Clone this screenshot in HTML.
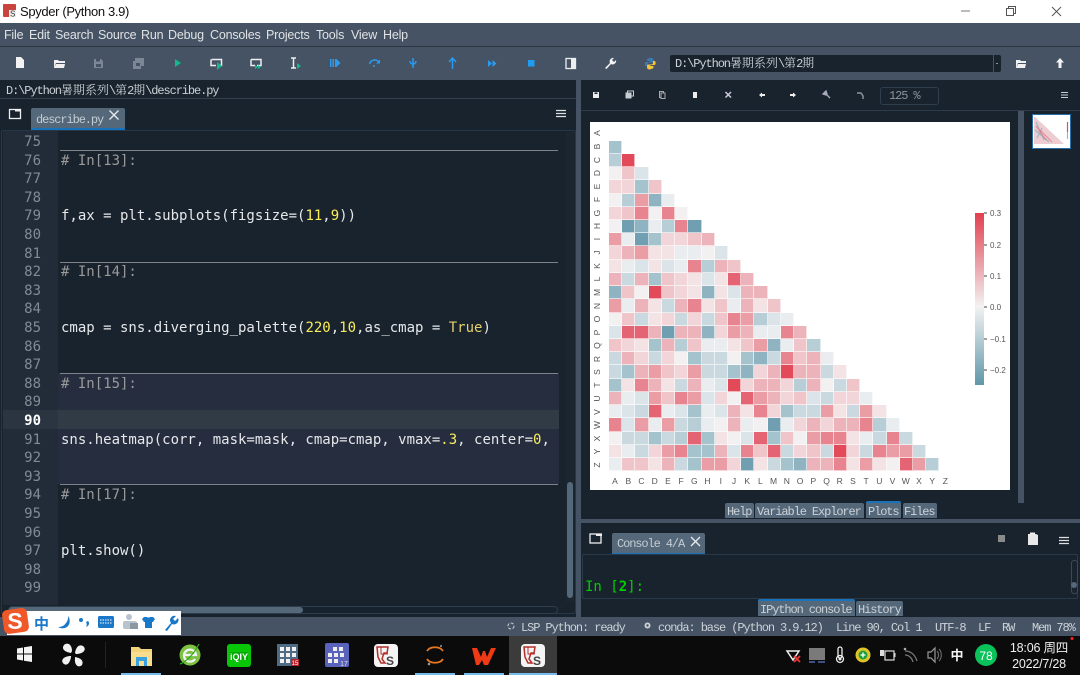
<!DOCTYPE html>
<html><head><meta charset="utf-8"><title>Spyder</title>
<style>
html,body{margin:0;padding:0;width:1080px;height:675px;overflow:hidden;background:#19232d}
div.a{position:absolute}
div.t{position:absolute;margin-top:1px;white-space:pre;font:12px/14px "Liberation Mono","Noto Serif CJK SC",monospace;letter-spacing:-1.1px;color:#ccd2d7}
div.t b{font-weight:400;letter-spacing:0}
div.m{position:absolute;white-space:pre;font:12.5px/16px "Liberation Sans",sans-serif;letter-spacing:-.2px;color:#e0e2e4;top:27px}
div.n{position:absolute;left:10px;width:31px;margin-top:1px;text-align:right;font:14px/18px "DejaVu Sans Mono",monospace;color:#7f8b95}
div.c{position:absolute;left:61px;margin-top:1px;white-space:pre;font:14px/18px "DejaVu Sans Mono",monospace;color:#e6e8ea}
div.c u{text-decoration:none;color:#faed5c}
div.h{color:#9a9a9a}
div.tab{position:absolute;background:#54687a;border-radius:2px 2px 0 0}
#heat{position:absolute;left:609px;top:140.7px}
#heat p{display:flex;margin:0;height:13.22px}
#heat i{display:block;flex:0 0 13.22px;height:13.22px;box-shadow:inset -1px -1px 0 rgba(255,255,255,.6)}
i.a{background:#e9edef}i.b{background:#dbe4e8}i.c{background:#c9d9df}i.d{background:#b7ced6}i.e{background:#a5c3cd}i.f{background:#8fb3c0}i.g{background:#6f9fb0}
i.n{background:#f2f0f0}i.p{background:#f3e3e5}i.q{background:#f1d5d9}i.r{background:#efc5ca}i.s{background:#edb3ba}i.t{background:#eb9da6}i.u{background:#e88490}i.v{background:#e56473}i.w{background:#e24a5a}
svg{position:absolute;left:0;top:0}
</style></head><body>
<!-- title bar -->
<div class="a" style="left:0;top:0;width:1080px;height:23px;background:#fff;border-bottom:1px solid #8b8f94"></div>
<div class="a" style="left:20px;top:3px;font:13px/18px 'Liberation Sans',sans-serif;letter-spacing:-.35px;color:#111;white-space:pre">Spyder (Python 3.9)</div>
<!-- menu -->
<div class="a" style="left:0;top:23px;width:1080px;height:23px;background:#455364;border-bottom:1px solid #2b3642"></div>
<div class="m" style="left:4px">File</div><div class="m" style="left:29px">Edit</div><div class="m" style="left:55px">Search</div><div class="m" style="left:98px">Source</div><div class="m" style="left:141px">Run</div><div class="m" style="left:168px">Debug</div><div class="m" style="left:210px">Consoles</div><div class="m" style="left:266px">Projects</div><div class="m" style="left:316px">Tools</div><div class="m" style="left:351px">View</div><div class="m" style="left:383px">Help</div>
<!-- toolbar -->
<div class="a" style="left:0;top:47px;width:1080px;height:33px;background:#455364"></div>
<div class="a" style="left:670px;top:55px;width:331px;height:17px;background:#19232d;border-radius:2px"></div>
<div class="a" style="left:993px;top:55px;width:1px;height:17px;background:#455364"></div>
<div class="t" style="left:675px;top:56px"><span>D:\Python</span><b>暑期系列</b>\<b>第</b>2<b>期</b></div>
<!-- path -->
<div class="a" style="left:0;top:98px;width:576px;height:1px;background:#32414b"></div>
<div class="t" style="left:6px;top:83px">D:\Python<b>暑期系列</b>\<b>第</b>2<b>期</b>\describe.py</div>
<!-- editor tab -->
<div class="tab" style="left:31px;top:108px;width:94px;height:20px;border-bottom:2px solid #1a72bb"></div>
<div class="t" style="left:36px;top:112px;color:#c4ccd3">describe.py</div>
<!-- editor -->
<div class="a" style="left:1px;top:130px;width:575px;height:484px;box-sizing:border-box;border:1px solid #24384c;border-radius:2px"></div>
<div class="a" style="left:3px;top:131px;width:55px;height:474px;background:#212c38"></div>
<div class="a" style="left:58px;top:373px;width:501px;height:111px;background:#252d3e"></div>
<div class="a" style="left:58px;top:410px;width:501px;height:19px;background:#303b46"></div>
<div class="a" style="left:3px;top:410px;width:55px;height:19px;background:#2a3541"></div>
<div class="a" style="left:60px;top:150px;width:498px;height:1px;background:#7d8388"></div>
<div class="a" style="left:60px;top:262px;width:498px;height:1px;background:#7d8388"></div>
<div class="a" style="left:60px;top:373px;width:498px;height:1px;background:#7d8388"></div>
<div class="a" style="left:60px;top:484px;width:498px;height:1px;background:#7d8388"></div>
<div class="n" style="top:132px">75</div><div class="n" style="top:151px">76</div><div class="n" style="top:169px">77</div><div class="n" style="top:188px">78</div><div class="n" style="top:206px">79</div><div class="n" style="top:225px">80</div><div class="n" style="top:244px">81</div><div class="n" style="top:262px">82</div><div class="n" style="top:281px">83</div><div class="n" style="top:299px">84</div><div class="n" style="top:318px">85</div><div class="n" style="top:337px">86</div><div class="n" style="top:355px">87</div><div class="n" style="top:374px">88</div><div class="n" style="top:392px">89</div><div class="n" style="top:411px;color:#fff;font-weight:700">90</div><div class="n" style="top:430px">91</div><div class="n" style="top:448px">92</div><div class="n" style="top:467px">93</div><div class="n" style="top:485px">94</div><div class="n" style="top:504px">95</div><div class="n" style="top:523px">96</div><div class="n" style="top:541px">97</div><div class="n" style="top:560px">98</div><div class="n" style="top:578px">99</div>
<div class="c h" style="top:151px"># In[13]:</div>
<div class="c" style="top:206px">f,ax = plt.subplots(figsize=(<u>11</u>,<u>9</u>))</div>
<div class="c h" style="top:262px"># In[14]:</div>
<div class="c" style="top:318px">cmap = sns.diverging_palette(<u>220</u>,<u>10</u>,as_cmap = <span style="color:#e4cf6a">True</span>)</div>
<div class="c h" style="top:374px"># In[15]:</div>
<div class="c" style="top:430px">sns.heatmap(corr, mask=mask, cmap=cmap, vmax=<u>.3</u>, center=<u>0</u>,</div>
<div class="c h" style="top:485px"># In[17]:</div>
<div class="c" style="top:541px">plt.show()</div>
<!-- editor scrollbars -->
<div class="a" style="left:566px;top:132px;width:8px;height:470px;background:#1b2631"></div>
<div class="a" style="left:567px;top:482px;width:6px;height:116px;background:#54687a;border-radius:3px"></div>
<div class="a" style="left:8px;top:606px;width:548px;height:6px;border:1px solid #2d3d4c;border-radius:4px;box-sizing:content-box"></div>
<div class="a" style="left:9px;top:607px;width:294px;height:6px;background:#54687a;border-radius:3px"></div>
<!-- splitter -->
<div class="a" style="left:576px;top:80px;width:5px;height:537px;background:#455364"></div>
<!-- plots pane -->
<div class="a" style="left:581px;top:110px;width:499px;height:1px;background:#2e3c4a"></div>
<div class="a" style="left:880px;top:87px;width:57px;height:16px;border:1px solid #2f3e4c;border-radius:3px"></div>
<div class="t" style="left:889px;top:88px;color:#8a949c">125 %</div>
<div class="a" style="left:590px;top:122px;width:420px;height:368px;background:#fff"></div>
<div class="a" style="left:1018px;top:111px;width:6px;height:392px;background:#455364"></div>
<div class="a" style="left:1032px;top:114px;width:37px;height:33px;background:#fff;border:1px solid #2a6ea8"></div>
<div id="heat">
<p><i class=e></i></p>
<p><i class=d></i><i class=w></i></p>
<p><i class=n></i><i class=r></i><i class=b></i></p>
<p><i class=q></i><i class=q></i><i class=e></i><i class=r></i></p>
<p><i class=n></i><i class=d></i><i class=t></i><i class=f></i><i class=a></i></p>
<p><i class=q></i><i class=r></i><i class=u></i><i class=n></i><i class=u></i><i class=n></i></p>
<p><i class=n></i><i class=g></i><i class=f></i><i class=a></i><i class=d></i><i class=u></i><i class=g></i></p>
<p><i class=t></i><i class=a></i><i class=g></i><i class=e></i><i class=q></i><i class=q></i><i class=r></i><i class=s></i></p>
<p><i class=q></i><i class=s></i><i class=t></i><i class=p></i><i class=p></i><i class=a></i><i class=a></i><i class=n></i><i class=b></i></p>
<p><i class=p></i><i class=a></i><i class=b></i><i class=p></i><i class=b></i><i class=a></i><i class=u></i><i class=d></i><i class=s></i><i class=r></i></p>
<p><i class=s></i><i class=c></i><i class=s></i><i class=e></i><i class=r></i><i class=q></i><i class=p></i><i class=b></i><i class=p></i><i class=v></i><i class=s></i></p>
<p><i class=f></i><i class=r></i><i class=n></i><i class=w></i><i class=r></i><i class=q></i><i class=p></i><i class=f></i><i class=p></i><i class=b></i><i class=s></i><i class=s></i></p>
<p><i class=t></i><i class=a></i><i class=s></i><i class=p></i><i class=c></i><i class=s></i><i class=u></i><i class=p></i><i class=r></i><i class=a></i><i class=s></i><i class=p></i><i class=r></i></p>
<p><i class=n></i><i class=r></i><i class=c></i><i class=p></i><i class=q></i><i class=c></i><i class=q></i><i class=c></i><i class=r></i><i class=u></i><i class=t></i><i class=d></i><i class=b></i><i class=a></i></p>
<p><i class=b></i><i class=v></i><i class=v></i><i class=s></i><i class=g></i><i class=s></i><i class=s></i><i class=f></i><i class=q></i><i class=t></i><i class=s></i><i class=a></i><i class=a></i><i class=u></i><i class=s></i></p>
<p><i class=r></i><i class=q></i><i class=p></i><i class=e></i><i class=s></i><i class=d></i><i class=r></i><i class=a></i><i class=a></i><i class=p></i><i class=r></i><i class=t></i><i class=f></i><i class=a></i><i class=r></i><i class=d></i></p>
<p><i class=c></i><i class=s></i><i class=q></i><i class=c></i><i class=q></i><i class=n></i><i class=e></i><i class=c></i><i class=c></i><i class=n></i><i class=e></i><i class=f></i><i class=c></i><i class=u></i><i class=r></i><i class=s></i><i class=a></i></p>
<p><i class=c></i><i class=e></i><i class=s></i><i class=t></i><i class=r></i><i class=q></i><i class=t></i><i class=c></i><i class=c></i><i class=e></i><i class=f></i><i class=q></i><i class=s></i><i class=w></i><i class=s></i><i class=s></i><i class=c></i><i class=p></i></p>
<p><i class=e></i><i class=p></i><i class=u></i><i class=s></i><i class=p></i><i class=c></i><i class=s></i><i class=a></i><i class=b></i><i class=w></i><i class=q></i><i class=s></i><i class=s></i><i class=q></i><i class=d></i><i class=s></i><i class=n></i><i class=c></i><i class=r></i></p>
<p><i class=s></i><i class=a></i><i class=b></i><i class=t></i><i class=r></i><i class=u></i><i class=t></i><i class=b></i><i class=q></i><i class=n></i><i class=v></i><i class=t></i><i class=s></i><i class=q></i><i class=r></i><i class=b></i><i class=c></i><i class=q></i><i class=q></i><i class=a></i></p>
<p><i class=a></i><i class=b></i><i class=c></i><i class=v></i><i class=a></i><i class=b></i><i class=e></i><i class=a></i><i class=b></i><i class=s></i><i class=p></i><i class=u></i><i class=q></i><i class=e></i><i class=c></i><i class=c></i><i class=t></i><i class=p></i><i class=c></i><i class=t></i><i class=p></i></p>
<p><i class=u></i><i class=b></i><i class=t></i><i class=a></i><i class=t></i><i class=c></i><i class=d></i><i class=a></i><i class=n></i><i class=s></i><i class=a></i><i class=n></i><i class=g></i><i class=a></i><i class=q></i><i class=s></i><i class=q></i><i class=s></i><i class=s></i><i class=u></i><i class=d></i><i class=a></i></p>
<p><i class=n></i><i class=c></i><i class=c></i><i class=e></i><i class=c></i><i class=d></i><i class=v></i><i class=e></i><i class=p></i><i class=n></i><i class=b></i><i class=v></i><i class=e></i><i class=r></i><i class=n></i><i class=t></i><i class=u></i><i class=u></i><i class=p></i><i class=a></i><i class=c></i><i class=u></i><i class=c></i></p>
<p><i class=p></i><i class=a></i><i class=c></i><i class=q></i><i class=t></i><i class=u></i><i class=e></i><i class=e></i><i class=s></i><i class=b></i><i class=u></i><i class=r></i><i class=v></i><i class=c></i><i class=q></i><i class=r></i><i class=c></i><i class=w></i><i class=q></i><i class=c></i><i class=u></i><i class=t></i><i class=t></i><i class=c></i></p>
<p><i class=a></i><i class=r></i><i class=r></i><i class=p></i><i class=s></i><i class=c></i><i class=e></i><i class=t></i><i class=t></i><i class=q></i><i class=g></i><i class=p></i><i class=c></i><i class=e></i><i class=f></i><i class=s></i><i class=s></i><i class=u></i><i class=p></i><i class=t></i><i class=p></i><i class=n></i><i class=v></i><i class=t></i><i class=d></i></p>
</div>
<div class="a" style="left:975px;top:213px;width:9px;height:172px;background:linear-gradient(#e23f4f 0%,#f2f2f2 54.5%,#5f97a9 100%)"></div>
<!-- plot tabs -->
<div class="tab" style="left:725px;top:503px;width:29px;height:15px"></div><div class="t" style="left:727px;top:504px">Help</div>
<div class="tab" style="left:755px;top:503px;width:109px;height:15px"></div><div class="t" style="left:757px;top:504px">Variable Explorer</div>
<div class="tab" style="left:866px;top:503px;width:35px;height:15px;border-top:2px solid #1a72bb;margin-top:-2px"></div><div class="t" style="left:868px;top:504px">Plots</div>
<div class="tab" style="left:903px;top:503px;width:34px;height:15px"></div><div class="t" style="left:904px;top:504px">Files</div>
<!-- splitter h -->
<div class="a" style="left:581px;top:519px;width:499px;height:4px;background:#455364"></div>
<!-- console -->
<div class="tab" style="left:612px;top:533px;width:93px;height:20px;border-bottom:2px solid #1a72bb"></div>
<div class="t" style="left:617px;top:536px;color:#c4ccd3">Console 4/A</div>
<div class="a" style="left:582px;top:554px;width:496px;height:45px;box-sizing:border-box;border:1px solid #2a3947;border-radius:2px"></div>
<div class="a" style="left:585px;top:578px;white-space:pre;font:14px/18px 'DejaVu Sans Mono',monospace;color:#00d000">In [<b>2</b>]:</div>
<div class="a" style="left:1071px;top:560px;width:5px;height:32px;border:1px solid #3a4a58;border-radius:3px"></div>
<div class="a" style="left:1071px;top:582px;width:6px;height:6px;background:#54687a;border-radius:50%"></div>
<div class="tab" style="left:758px;top:601px;width:97px;height:15px;border-top:2px solid #1a72bb;margin-top:-2px"></div><div class="t" style="left:760px;top:602px">IPython console</div>
<div class="tab" style="left:856px;top:601px;width:47px;height:15px"></div><div class="t" style="left:858px;top:602px">History</div>
<!-- status bar -->
<div class="a" style="left:0;top:617px;width:1080px;height:19px;background:#455364"></div>
<div class="t" style="left:521px;top:620px">LSP Python: ready</div>
<div class="t" style="left:658px;top:620px">conda: base (Python 3.9.12)</div>
<div class="t" style="left:836px;top:620px">Line 90, Col 1</div>
<div class="t" style="left:935px;top:620px">UTF-8</div>
<div class="t" style="left:978px;top:620px">LF</div>
<div class="t" style="left:1002px;top:620px">RW</div>
<div class="t" style="left:1032px;top:620px">Mem 78%</div>
<!-- taskbar -->
<div class="a" style="left:0;top:636px;width:1080px;height:39px;background:#0b0b0c"></div>
<div class="a" style="left:509px;top:636px;width:48px;height:39px;background:#3b3b3b"></div>
<div class="a" style="left:121px;top:673px;width:40px;height:2px;background:#76b9ed"></div>
<div class="a" style="left:415px;top:673px;width:40px;height:2px;background:#76b9ed"></div>
<div class="a" style="left:464px;top:673px;width:40px;height:2px;background:#76b9ed"></div>
<div class="a" style="left:509px;top:673px;width:48px;height:2px;background:#76b9ed"></div>
<div class="a" style="left:1009px;top:640px;width:60px;font:12.5px/16px 'Liberation Sans','Noto Sans CJK SC',sans-serif;letter-spacing:-.2px;color:#f0f0f0;white-space:pre;text-align:center">18:06 周四
2022/7/28</div>
<svg width="1080" height="675" viewBox="0 0 1080 675" xmlns="http://www.w3.org/2000/svg">
<!-- title icon -->
<g><rect x="3" y="4" width="13" height="13" fill="#c9433f" rx="1"/><rect x="9" y="10" width="7" height="7" fill="#eee"/><text x="10" y="16.5" font-family="Liberation Sans" font-size="8" fill="#333">S</text></g>
<!-- window buttons -->
<path d="M961 11h9" stroke="#777" stroke-width="1"/>
<path d="M1006.5 8.5h7v7h-7zM1008.5 8.5v-2h7v7h-2" fill="none" stroke="#555"/>
<path d="M1052 7l9 9M1061 7l-9 9" stroke="#555"/>
<!-- toolbar icons -->
<path d="M16 57h5l3 3v8h-8z" fill="#f2f2f2"/>
<path d="M54 60h4l1 1h6v2h-9l-2 5zM56 64h9l-1 4H54z" fill="#f0f0f0"/>
<path d="M94 59h7l2 2v7h-9z" fill="#7b8794"/><rect x="96" y="59" width="4" height="2.5" fill="#455364"/><rect x="96" y="64" width="5" height="3" fill="#455364"/>
<path d="M133 61h2v-3h9v8h-3v3h-8z" fill="#7b8794"/><rect x="136" y="63" width="4" height="3" fill="#455364"/>
<path d="M175 59l6 4-6 4z" fill="#14b88f"/>
<path d="M211.5 59.5h10v6h-3" fill="none" stroke="#eee" stroke-width="1.500"/><path d="M211 59.500v6h5" fill="none" stroke="#eee" stroke-width="1.500"/><path d="M217 62l5 4-5 4z" fill="#14b88f"/>
<path d="M251 59.500h10v6h-4M251 59.500v6h4" fill="none" stroke="#eee" stroke-width="1.500"/><path d="M255 65l3 2-3 2zM258 65l3 2-3 2z" fill="#14b88f"/>
<path d="M291 58h5M291 68h5M293.500 58v10" stroke="#eee" stroke-width="1.500" fill="none"/><path d="M297 63l4 3-4 3z" fill="#14b88f"/>
<path d="M330 59h1.500v8H330zM332.500 59h1.500v8h-1.500zM335 59h1.500v8H335z" fill="#2a9bef"/><path d="M336.500 59l4 4-4 4z" fill="#2a9bef"/>
<path d="M369.500 64a5.500 5.500 0 0 1 9.500-2" fill="none" stroke="#2a9bef" stroke-width="1.500"/><path d="M380 59.500v4h-4z" fill="#2a9bef"/><circle cx="374" cy="66" r="1" fill="#2a9bef"/>
<path d="M413 58v10M410 61a3 3 0 0 0 6 0" fill="none" stroke="#2a9bef" stroke-width="1.500"/>
<path d="M452.500 69V59M449 62l3.500-4 3.500 4" fill="none" stroke="#2a9bef" stroke-width="1.500"/>
<path d="M488 60l4 3.500-4 3.500zM492.500 60l4 3.500-4 3.500z" fill="#2a9bef"/>
<rect x="528" y="60" width="6.500" height="6.500" fill="#1e9df0"/>
<rect x="566" y="58.500" width="9.500" height="10" fill="none" stroke="#eee" stroke-width="1.300"/><rect x="571" y="58.500" width="4.500" height="10" fill="#eee"/>
<path d="M605 68l5-5a3.500 3.500 0 0 1 4-5l-2 2 2 2 2-2a3.500 3.500 0 0 1-5 4l-4.500 5z" fill="#f3f3f3"/>
<path d="M650 58c-3 0-3 1.500-3 3h3v1h-4c-1.500 0-1.500 4 0 4h1.500v-2c0-1 1-1.500 2.500-1.500h2.500c.8 0 1-.8 1-1.500v-1.500c0-1.500-1.500-1.500-3-1.500z" fill="#3c7ab2"/><path d="M650.500 69c3 0 3-1.500 3-3h-3v-1h4c1.500 0 1.500-4 0-4H653v2c0 1-1 1.500-2.500 1.500H648c-.8 0-1 .8-1 1.500v1.500c0 1.500 1.500 2 3.500 2z" fill="#f2c53a"/>
<path d="M996 63.500h2" stroke="#8a959f"/>
<path d="M1016 60h4l1 1h5v2h-8l-2 5zM1018 64h8l-1 4h-9z" fill="#f0f0f0"/>
<path d="M1060 58l4 4.500h-2.500V68h-3v-5.500H1056z" fill="#f3f3f3"/>
<!-- plot toolbar icons -->
<rect x="593" y="92" width="6" height="6" fill="#eee"/><rect x="594.500" y="92.500" width="3" height="1.500" fill="#19232d"/>
<rect x="625.500" y="92.500" width="6" height="6" fill="#c8cdd1"/><rect x="627.500" y="91" width="6" height="5" fill="none" stroke="#c8cdd1"/>
<rect x="659.500" y="91.500" width="4" height="6" fill="none" stroke="#aaa"/><rect x="661" y="93" width="4" height="5.500" fill="#19232d" stroke="#aaa"/>
<rect x="693" y="92" width="4" height="6" fill="#eee"/>
<path d="M725.500 92l5.500 5.500M731 92l-5.500 5.500" stroke="#ccd" stroke-width="1.500"/>
<path d="M759 95l3-2.500V94h3v2h-3v1.500z" fill="#eee"/>
<path d="M796 95l-3-2.500V94h-3v2h3v1.500z" fill="#eee"/>
<path d="M824 92l6 6M826 91l-3 3 3 1 1-1z" stroke="#aab" stroke-width="1.300" fill="#aab"/>
<path d="M857 93h4l2 3v3" fill="none" stroke="#8a949c" stroke-width="1.500"/>
<path d="M1061 92.500h7M1061 95h7M1061 97.500h7" stroke="#c8cdd1"/>
<!-- editor pane icons -->
<rect x="9.500" y="109.500" width="11" height="9" fill="none" stroke="#eee" stroke-width="1.300"/><rect x="15" y="109" width="6" height="2.500" fill="#eee"/>
<path d="M109.500 111.500l9 9M118.500 111.500l-9 9" stroke="#e8ecef" stroke-width="1.300" transform="translate(0,-1)"/>
<path d="M556 110.500h10M556 113.500h10M556 116.500h10" stroke="#e0e0e0" stroke-width="1.300"/>
<!-- plot thumbnail -->
<path d="M1034 116v28h30z" fill="#eecdd2"/><path d="M1036 122l8 18M1035 130l14 12M1037 138l5-10" stroke="#8fb3c0" stroke-width="1.300" opacity=".8"/><path d="M1036 126l10 14M1040 130l12 12" stroke="#e5707e" stroke-width="1.200" opacity=".7"/><path d="M1067.500 122v10" stroke="#e24a5a" stroke-width="1.200"/><path d="M1067.500 132v7" stroke="#9db7c2" stroke-width="1.200"/>
<!-- y letters -->
<g font-family="Liberation Sans" font-size="8.500" fill="#555" text-anchor="middle">
<text transform="translate(600,133) rotate(-90)">A</text><text transform="translate(600,146.500) rotate(-90)">B</text><text transform="translate(600,160) rotate(-90)">C</text><text transform="translate(600,173) rotate(-90)">D</text><text transform="translate(600,186.500) rotate(-90)">E</text><text transform="translate(600,199.500) rotate(-90)">F</text><text transform="translate(600,213) rotate(-90)">G</text><text transform="translate(600,226) rotate(-90)">H</text><text transform="translate(600,239) rotate(-90)">I</text><text transform="translate(600,252.500) rotate(-90)">J</text><text transform="translate(600,266) rotate(-90)">K</text><text transform="translate(600,279) rotate(-90)">L</text><text transform="translate(600,292.500) rotate(-90)">M</text><text transform="translate(600,306) rotate(-90)">N</text><text transform="translate(600,319) rotate(-90)">O</text><text transform="translate(600,332.500) rotate(-90)">P</text><text transform="translate(600,345.500) rotate(-90)">Q</text><text transform="translate(600,359) rotate(-90)">R</text><text transform="translate(600,372) rotate(-90)">S</text><text transform="translate(600,385) rotate(-90)">T</text><text transform="translate(600,398.500) rotate(-90)">U</text><text transform="translate(600,412) rotate(-90)">V</text><text transform="translate(600,425) rotate(-90)">W</text><text transform="translate(600,438.500) rotate(-90)">X</text><text transform="translate(600,451.500) rotate(-90)">Y</text><text transform="translate(600,465) rotate(-90)">Z</text>
<text x="615" y="484">A</text><text x="628.300" y="484">B</text><text x="641.500" y="484">C</text><text x="654.700" y="484">D</text><text x="667.900" y="484">E</text><text x="681.100" y="484">F</text><text x="694.300" y="484">G</text><text x="707.500" y="484">H</text><text x="720.800" y="484">I</text><text x="734" y="484">J</text><text x="747.200" y="484">K</text><text x="760.400" y="484">L</text><text x="773.600" y="484">M</text><text x="786.800" y="484">N</text><text x="800" y="484">O</text><text x="813.300" y="484">P</text><text x="826.500" y="484">Q</text><text x="839.700" y="484">R</text><text x="852.900" y="484">S</text><text x="866.100" y="484">T</text><text x="879.300" y="484">U</text><text x="892.500" y="484">V</text><text x="905.800" y="484">W</text><text x="919" y="484">X</text><text x="932.200" y="484">Y</text><text x="945.400" y="484">Z</text>
</g>
<!-- colorbar ticks -->
<path d="M984 213h3M984 245h3M984 276h3M984 307h3M984 339h3M984 370h3" stroke="#444"/>
<g font-family="Liberation Sans" font-size="8" fill="#555"><text x="990" y="216">0.3</text><text x="990" y="248">0.2</text><text x="990" y="279">0.1</text><text x="990" y="310">0.0</text><text x="990" y="342">−0.1</text><text x="990" y="373">−0.2</text></g>
<!-- console icons -->
<rect x="590" y="534" width="11" height="9" fill="none" stroke="#eee" stroke-width="1.300"/><rect x="596" y="533.500" width="6" height="2.500" fill="#eee"/>
<path d="M691 537l9 9M700 537l-9 9" stroke="#e8ecef" stroke-width="1.300"/>
<rect x="998" y="535" width="7" height="7" fill="#8a8a8a"/>
<path d="M1028 534h8l2 1v10h-10z" fill="#e8e8e8"/><rect x="1030" y="532.500" width="5" height="2" fill="#eee"/>
<path d="M1059 537.500h10M1059 540.500h10M1059 543.500h10" stroke="#e0e0e0" stroke-width="1.300"/>
<!-- status icons -->
<circle cx="511" cy="626" r="3" fill="none" stroke="#ccd2d7" stroke-dasharray="3 1.500"/>
<circle cx="647.500" cy="625.500" r="3" fill="#ccd2d7"/><circle cx="647.500" cy="625.500" r="1.200" fill="#455364"/>
<!-- IME bar -->
<rect x="7" y="611" width="174" height="24" fill="#fff"/>
<rect x="3" y="609" width="25" height="24" rx="5" fill="#f0582a" transform="rotate(-8 15 621)"/>
<text x="15" y="629" font-family="Liberation Sans" font-size="23" font-weight="700" fill="#fff" text-anchor="middle">S</text>
<g fill="#1a78c8"><text x="34" y="629" font-family="Noto Sans CJK SC" font-size="15" font-weight="700">中</text>
<path d="M68 616a8 8 0 0 1-1 11 8 8 0 0 1-9 0 9 9 0 0 0 8-4 9 9 0 0 0 2-7z"/>
<circle cx="81" cy="620" r="2"/><path d="M88 621c2 2 1 5-2 6 1-2 1-3 0-5z"/>
<rect x="98" y="616" width="16" height="12" rx="1.500"/><path d="M100 620h12M100 623h12" stroke="#fff" stroke-dasharray="1.500 1"/>
<path d="M147 617h-3l-2 2 2 3h1v6h7v-6h1l2-3-2-2h-3a2 2 0 0 1-3 0z"/>
<path d="M165 630l6-7a4.500 4.500 0 0 1 5-7l-3 3 2 2 3-3a4.500 4.500 0 0 1-6 6l-5 7z"/></g>
<circle cx="129" cy="617" r="3" fill="#b9c3cd"/><rect x="123" y="621" width="14" height="8" rx="2" fill="#b9c3cd"/><rect x="130" y="623" width="8" height="6" fill="#8b97a3"/>
<!-- taskbar icons -->
<path d="M17 648.500l6-1v6h-6zM24 647.300l8-1.300v7.500h-8zM17 654.500h6v6l-6-1zM24 654.500h8v7.500l-8-1.300z" fill="#f4f4f4"/>
<g fill="#f1f1f1"><path d="M71 653c-6-1-10-4-7-8 3-3 8-1 8 6zM75 653c1-6 4-9 8-7 4 3 1 8-7 8zM75 657c6 1 9 4 7 8-3 3-8 1-7-7zM71 657c-1 6-4 9-7 7-4-3-1-8 7-8z"/></g>
<rect x="105" y="642" width="1" height="26" fill="#222"/>
<path d="M131 647h8l2 2h11v17h-21z" fill="#f2d27a"/><path d="M131 652h21v14h-21z" fill="#f8dd8e"/><rect x="136" y="657" width="11" height="9" fill="#3aa1e0"/><rect x="139" y="661" width="5" height="5" fill="#f8dd8e"/>
<circle cx="190" cy="655" r="10.500" fill="#7ec243"/><path d="M184 655h12a6 6 0 1 0-1 4" fill="none" stroke="#f3f3f3" stroke-width="2.300"/><path d="M180 664c6-2 14-10 19-20" fill="none" stroke="#2da81d" stroke-width="1.200"/>
<rect x="227" y="644" width="24" height="23" rx="3" fill="#08c508"/><rect x="230" y="652" width="18" height="8" fill="#0a0"/><text x="239" y="660" font-family="Liberation Sans" font-weight="700" font-size="9" fill="#fff" text-anchor="middle">iQIY</text>
<rect x="277" y="644" width="21" height="22" fill="#506b85"/><g fill="#f2f2f2"><rect x="280" y="647" width="4" height="4"/><rect x="286" y="647" width="4" height="4"/><rect x="292" y="647" width="4" height="4"/><rect x="280" y="653" width="4" height="4"/><rect x="286" y="653" width="4" height="4"/><rect x="292" y="653" width="4" height="4"/><rect x="280" y="659" width="4" height="4"/><rect x="286" y="659" width="4" height="4"/></g><rect x="291" y="659" width="8" height="7" fill="#b9202a"/><text x="295" y="665" font-family="Liberation Sans" font-size="6" fill="#fff" text-anchor="middle">15</text>
<rect x="325" y="643" width="24" height="24" rx="2" fill="#5a63bc"/><g fill="#eee"><rect x="333" y="647" width="4" height="4"/><rect x="339" y="647" width="4" height="4"/><rect x="328" y="653" width="4" height="4"/><rect x="334" y="653" width="4" height="4"/><rect x="340" y="653" width="4" height="4"/><rect x="328" y="659" width="4" height="4"/><rect x="334" y="659" width="4" height="4"/></g><text x="344" y="666" font-family="Liberation Sans" font-size="7" fill="#ddd" text-anchor="middle">17</text>
<g id="sp"><rect x="374" y="644" width="24" height="23" rx="4" fill="#f4f4f4"/><path d="M377 647h11l-1 6h-3l-2 6 3 4h-4l-3-6z" fill="none" stroke="#b3302c" stroke-width="1.500"/><path d="M381 647v7l7 0" fill="none" stroke="#b3302c"/><text x="390" y="665" font-family="Liberation Sans" font-size="12" font-weight="700" fill="#444" text-anchor="middle">S</text></g>
<path d="M427 651c3-5 13-5 16 0" fill="none" stroke="#e8761e" stroke-width="1.800"/><path d="M427 659c3 5 13 5 16 0" fill="none" stroke="#e8761e" stroke-width="1.800"/><circle cx="441" cy="646" r="1" fill="#999"/><circle cx="429" cy="664" r="1.300" fill="#999"/>
<path d="M472 648h5l4 9 2-6h2l2 6 4-9h5l-8 17h-4l-2-5-3 5h-3z" fill="#f03a16"/>
<rect x="521" y="644" width="24" height="23" rx="4" fill="#f4f4f4"/><path d="M524 647h11l-1 6h-3l-2 6 3 4h-4l-3-6z" fill="none" stroke="#b3302c" stroke-width="1.500"/><path d="M528 647v7l7 0" fill="none" stroke="#b3302c"/><text x="537" y="665" font-family="Liberation Sans" font-size="12" font-weight="700" fill="#444" text-anchor="middle">S</text>
<!-- tray -->
<path d="M787 651h12l-6 9z" fill="none" stroke="#eee" stroke-width="1.500"/><path d="M794 656l6 6M800 656l-6 6" stroke="#e33" stroke-width="1.800"/>
<rect x="809" y="648" width="16" height="12" fill="#7a7a7a"/><path d="M809 662h6M818 662h7" stroke="#5566a8" stroke-width="1.600"/>
<rect x="838" y="647" width="4" height="11" rx="2" fill="none" stroke="#eee" stroke-width="1.300"/><circle cx="840" cy="659" r="3.500" fill="none" stroke="#eee" stroke-width="1.300"/><circle cx="840" cy="659" r="1.500" fill="#eee"/>
<circle cx="863" cy="655" r="7.500" fill="#e0c528"/><circle cx="863" cy="655" r="4.500" fill="#1e9e3c"/><path d="M860.500 655h5M863 652.500v5" stroke="#fff" stroke-width="1.300"/>
<rect x="885" y="651" width="9" height="9" fill="none" stroke="#ddd" stroke-width="1.200"/><rect x="880" y="650" width="4" height="6" fill="#ddd"/><rect x="894" y="653" width="1.500" height="4" fill="#ddd"/>
<path d="M905 655c4 0 7 3 8 7M905 651c6 0 10 4 12 10" fill="none" stroke="#777" stroke-width="1.200"/><circle cx="905" cy="649" r="1.300" fill="#aaa"/>
<path d="M928 652h3l4-4v14l-4-4h-3z" fill="none" stroke="#999" stroke-width="1.200"/><path d="M937 651c2 2 2 6 0 8M939 649c3 3 3 9 0 12" fill="none" stroke="#777"/>
<text x="957" y="660" font-family="Noto Sans CJK SC" font-size="13" font-weight="700" fill="#f4f4f4" text-anchor="middle">中</text>
<circle cx="986" cy="655" r="11" fill="#09c25a"/><text x="986" y="660" font-family="Liberation Sans" font-size="12" fill="#fff" text-anchor="middle">78</text>
<circle cx="1072" cy="638.500" r="1.500" fill="#f22"/>
</svg>
</body></html>
